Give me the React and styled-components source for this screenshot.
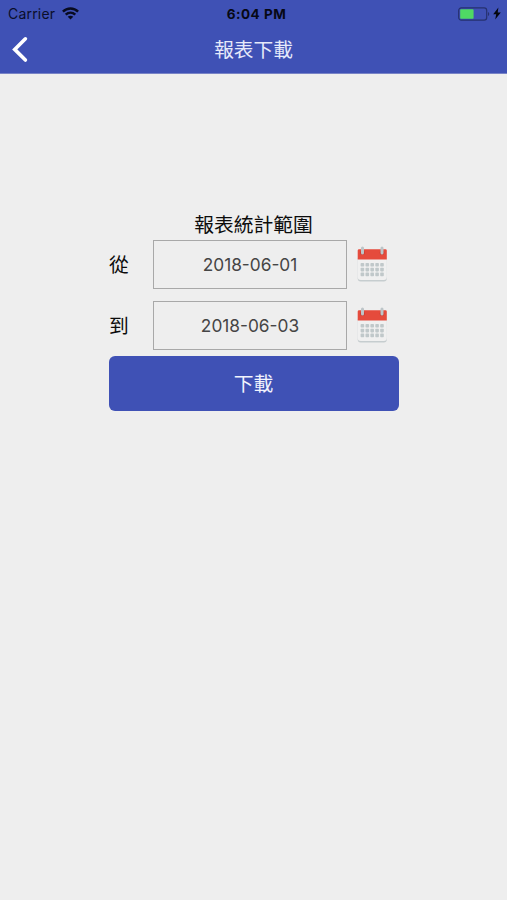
import React from "react";
import styled, { createGlobalStyle } from "styled-components";

const GlobalStyle = createGlobalStyle`
  * {
    box-sizing: border-box;
  }
  body {
    margin: 0;
    background-color: #eeeeee;
    font-family: Inter, "Noto Sans CJK TC", sans-serif;
  }
`;

const StyledScreen = styled.div`
  width: 100%;
  min-height: 100vh;
  background-color: #eeeeee;
`;

const StyledHeader = styled.header`
  height: 74px;
  background-color: #3f51b5;
  border-bottom: 1px solid #7883c6;
`;

const StatusBar = styled.div`
  height: 27px;
  padding: 0 6px 0 8px;
  display: grid;
  grid-template-columns: 1fr auto 1fr;
  align-items: center;
  color: #0a0e2a;
  font-size: 14px;
`;

const StatusGroup = styled.div`
  display: flex;
  align-items: center;
  justify-content: ${(props) => (props.$end ? "flex-end" : "flex-start")};
  gap: ${(props) => props.$gap};
  letter-spacing: 0.2px;
`;

const Clock = styled.span`
  color: #060814;
  font-size: 13.5px;
  font-weight: 700;
  letter-spacing: 0.5px;
  padding-left: 4px;
`;

const NavBar = styled.div`
  height: 46px;
  padding-left: 11px;
  display: grid;
  grid-template-columns: 60px 1fr 71px;
  align-items: center;
`;

const BackButton = styled.button`
  border: none;
  padding: 0;
  background: none;
  display: flex;
`;

const Title = styled.h1`
  margin: 0;
  padding-top: 1px;
  color: #e6e9fa;
  font-size: 19.7px;
  font-weight: 400;
  line-height: 29px;
  text-align: center;
`;

const Form = styled.main`
  width: 290px;
  margin: 0 auto;
  padding-top: 136px;
`;

const FormTitle = styled.h2`
  margin: 0;
  color: #0c0c0c;
  font-size: 19.8px;
  font-weight: 400;
  line-height: 30px;
  text-align: center;
`;

const Row = styled.div`
  height: 49px;
  margin-bottom: ${(props) => props.$space};
  display: flex;
  align-items: center;
`;

const Label = styled.label`
  width: 44.5px;
  padding-left: 0.5px;
  color: #0c0c0c;
  font-size: 19.8px;
  line-height: 30px;
`;

const DateField = styled.div`
  width: 194px;
  height: 49px;
  margin-right: 10px;
  padding-bottom: 1px;
  border: 1px solid #a8a8a8;
  display: flex;
  align-items: center;
  justify-content: center;
  color: #454545;
  font-size: 17.3px;
`;

const DownloadButton = styled.button`
  width: 100%;
  height: 55px;
  padding: 0 0 2px;
  border: none;
  border-radius: 6px;
  background-color: #3f51b5;
  color: #f1f3fd;
  font-family: inherit;
  font-size: 19.8px;
  font-weight: 400;
`;

function WifiIcon() {
  return (
    <svg width="17" height="13" viewBox="0 0 17 13">
      <g fill="none" stroke="#080b20" strokeWidth="2.4">
        <path d="M.9 4.7C5.1.5 11.9.5 16.1 4.7" />
        <path d="M3.7 7.6c2.8-2.6 6.8-2.6 9.6 0" />
      </g>
      <path d="M5.7 9.8c1.6-1.4 4-1.4 5.6 0L8.5 12.6z" fill="#080b20" />
    </svg>
  );
}

function BatteryIcon() {
  return (
    <svg width="32" height="14" viewBox="0 0 32 14">
      <rect x="0.7" y="0.8" width="28" height="12.4" rx="2.6" fill="none" stroke="#26316f" strokeWidth="1.2" />
      <rect x="2.2" y="2.2" width="13.4" height="9.6" rx="0.8" fill="#4fd964" />
      <path d="M30 5v4c1.7-.7 1.7-3.3 0-4z" fill="#26316f" />
    </svg>
  );
}

function BoltIcon() {
  return (
    <svg width="8" height="13" viewBox="0 0 8 13">
      <path d="M5.4.5.2 7.2h3L2.2 12.5 7.8 5.4H4.7z" fill="#05070f" />
    </svg>
  );
}

function BackIcon() {
  return (
    <svg width="18" height="28" viewBox="0 0 18 28">
      <path d="M14.4 2.8 3.7 13.4l10.7 10.6" fill="none" stroke="#fff" strokeWidth="3.6" strokeLinecap="round" strokeLinejoin="miter" />
    </svg>
  );
}

function CalendarIcon() {
  return (
    <svg width="31" height="37" viewBox="0 0 31 37">
      <path d="M.7 12h29.1v20.6a3 3 0 0 1-3 3H3.7a3 3 0 0 1-3-3z" fill="#c6cdcf" />
      <path d="M.7 12h29.1v18.9a3 3 0 0 1-3 3H3.7a3 3 0 0 1-3-3z" fill="#f0f0f0" />
      <path d="M.7 4.6a1.4 1.4 0 0 1 1.4-1.4h26.3a1.4 1.4 0 0 1 1.4 1.4v8.8H.7z" fill="#e54b3c" />
      <g fill="#c0c8ca">
        {[17, 21.8, 26.6].map((y) =>
          [3.6, 8.5, 13.4, 18.3, 23.2].map((x) => (
            <rect key={`${x}-${y}`} x={x} y={y} width="3.6" height="3.6" rx="0.8" />
          ))
        )}
      </g>
      {[5.5, 25].map((x) => (
        <g key={x}>
          <circle cx={x} cy="6.7" r="2.4" fill="#c83d32" />
          <path d={`M${x} 2v5`} stroke="#bdc5c8" strokeWidth="3" strokeLinecap="round" />
        </g>
      ))}
    </svg>
  );
}

function DateRow({ label, value, space }) {
  return (
    <Row $space={space}>
      <Label>{label}</Label>
      <DateField>{value}</DateField>
      <CalendarIcon />
    </Row>
  );
}

function App() {
  return (
    <>
      <GlobalStyle />
      <StyledScreen>
        <StyledHeader>
          <StatusBar>
            <StatusGroup $gap="7px">
              Carrier
              <WifiIcon />
            </StatusGroup>
            <Clock>6:04 PM</Clock>
            <StatusGroup $gap="3px" $end>
              <BatteryIcon />
              <BoltIcon />
            </StatusGroup>
          </StatusBar>
          <NavBar>
            <BackButton>
              <BackIcon />
            </BackButton>
            <Title>報表下載</Title>
          </NavBar>
        </StyledHeader>
        <Form>
          <FormTitle>報表統計範圍</FormTitle>
          <DateRow label="從" value="2018-06-01" space="12px" />
          <DateRow label="到" value="2018-06-03" space="6px" />
          <DownloadButton>下載</DownloadButton>
        </Form>
      </StyledScreen>
    </>
  );
}

export default App;
